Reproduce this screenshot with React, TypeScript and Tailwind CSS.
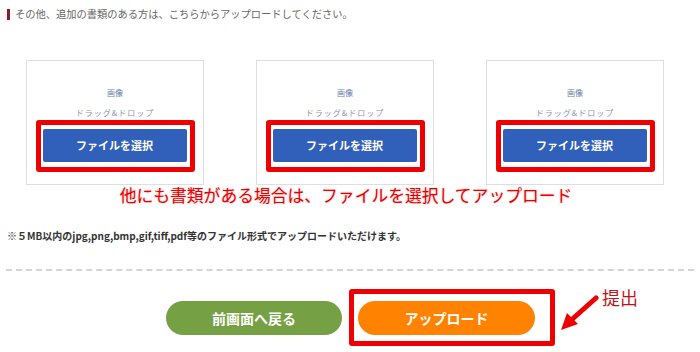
import React from 'react'

const jp = { fontFamily: '"Noto Sans CJK JP", "Noto Sans", sans-serif' }

function UploadBox() {
  return (
    <div className="w-[178px] h-[125px] border border-[#dedede] flex flex-col items-center">
      <p className="mt-[26px] text-[8px] leading-[12px] text-[#6a7fae]">画像</p>
      <p className="mt-[8px] text-[8px] leading-[12px] tracking-[1px] text-[#8a96b4]">ドラッグ&amp;ドロップ</p>
      {/* annotation frame */}
      <div className="mt-[1px] border-[5px] border-[#ee0000] rounded-[3px] pt-[4px] pb-[5px] pl-[2px] pr-[3px]">
        <button className="w-[144px] h-[33px] bg-[#3160bb] rounded-[2px] text-white text-[11px] font-bold">
          ファイルを選択
        </button>
      </div>
    </div>
  )
}

export default function App() {
  return (
    <div className="w-[700px] h-[352px] bg-white overflow-hidden relative" style={jp}>
      {/* Intro line */}
      <div className="flex items-center pl-[7px] pt-[8px]">
        <span className="w-[3px] h-[11px] bg-[#8a1c2b]" />
        <p className="ml-[5px] text-[10.25px] leading-[12px] text-[#666]">
          その他、追加の書類のある方は、こちらからアップロードしてください。
        </p>
      </div>

      {/* Upload boxes */}
      <div className="flex gap-[52px] pl-[26px] mt-[40px]">
        <UploadBox />
        <UploadBox />
        <UploadBox />
      </div>

      {/* Annotation */}
      <p className="text-center pr-[8px] -mt-[1px] text-[16.8px] leading-[22px] text-[#e60000] [text-shadow:0_0_2px_rgba(255,120,120,0.6)]">
        他にも書類がある場合は、ファイルを選択してアップロード
      </p>

      {/* Note */}
      <p className="pl-[7px] mt-[24px] text-[10px] leading-[12px] font-bold text-[#333]">
        ※５MB以内のjpg,png,bmp,gif,tiff,pdf等のファイル形式でアップロードいただけます。
      </p>

      {/* Divider */}
      <div className="mx-[6px] mt-[27px] border-t-2 border-dashed border-[#d4d4d4]" />

      {/* Actions */}
      <div className="flex items-start mt-[18px] pl-[166px]">
        <button className="mt-[12px] w-[176px] h-[34px] rounded-full bg-[#76a044] text-white text-[14px] font-bold">
          前画面へ戻る
        </button>
        <div className="ml-[7px] border-[5px] border-[#ee0000] rounded-[3px] pt-[7px] pb-[6px] pl-[4px] pr-[15px]">
          <button className="w-[177px] h-[34px] rounded-full bg-[#ff8200] text-white text-[14px] font-bold">
            アップロード
          </button>
        </div>
        <div className="relative">
          <svg width="45" height="40" viewBox="0 0 45 40" className="absolute left-[2px] top-[6px]">
            <line x1="39" y1="3" x2="12" y2="27" stroke="#ee0000" strokeWidth="5" strokeLinecap="round" />
            <polygon points="4,35 10,18 21,29" fill="#ee0000" />
          </svg>
          <span className="absolute left-[47px] -top-[4px] text-[18px] leading-[24px] text-[#c0141c] whitespace-nowrap">
            提出
          </span>
        </div>
      </div>
    </div>
  )
}
